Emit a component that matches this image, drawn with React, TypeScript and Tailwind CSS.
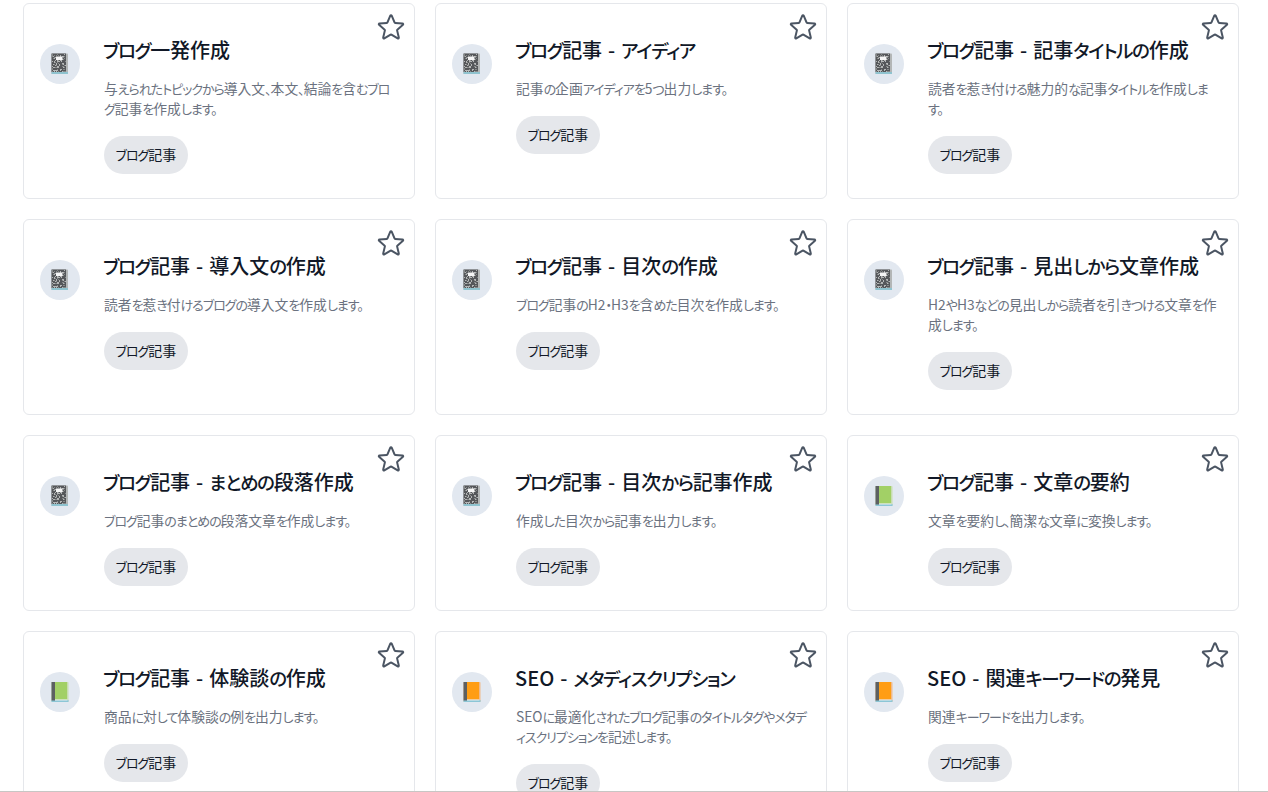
import React from "react";
import { HiOutlineStar } from "react-icons/hi2";

type Kind = "note" | "green" | "orange";

const speckles: [number, number, string][] = [];
let seed = 17;
for (let y = 0; y < 18; y += 1) {
  for (let x = 0; x < 14; x += 1) {
    seed = (seed * 137 + 59) % 1009;
    if (seed % 5 < 2) speckles.push([x, y, seed % 2 ? "#b4b6b6" : "#858888"]);
  }
}

function BookIcon({ kind }: { kind: Kind }) {
  if (kind === "note") {
    return (
      <svg width="18" height="22" viewBox="0 0 18 22" aria-hidden="true">
        <rect x="0.5" y="0.5" width="16.5" height="20.5" rx="0.8" fill="#b3b6b6" />
        <rect x="0.5" y="19" width="16.5" height="2" fill="#8fc3cf" />
        <rect x="0.5" y="0.5" width="14.5" height="18.5" fill="#55575a" />
        {speckles.map(([x, y, c], i) => (
          <rect key={i} x={1 + x} y={1 + y} width="1" height="1" fill={c} />
        ))}
        <rect x="5" y="3.5" width="6.5" height="3.5" fill="#f5f5f5" />
      </svg>
    );
  }
  const main = kind === "green" ? "#a2d066" : "#ff9d14";
  const edge = kind === "green" ? "#c7ddb0" : "#f0b98a";
  return (
    <svg width="18" height="22" viewBox="0 0 18 22" aria-hidden="true">
      <rect x="0.5" y="1" width="17" height="20" rx="0.8" fill={edge} />
      <rect x="0.5" y="19" width="17" height="2" fill="#8cc6d6" />
      <rect x="0.5" y="1" width="3.5" height="18.5" fill="#5d6062" />
      <rect x="4" y="1" width="12" height="17.5" fill={main} />
      <rect x="4" y="18.5" width="12.5" height="1" fill="#e7eef0" />
    </svg>
  );
}

// The reference's typeface has condensed kana beside full-width kanji.
function Narrow({ text, kanaClass }: { text: string; kanaClass: string }) {
  const parts = text.split(/([\u3040-\u30ff、。・]+)/);
  return (
    <>
      {parts.map((p, i) =>
        i % 2 === 1 ? (
          <span key={i} className={kanaClass}>
            {p}
          </span>
        ) : (
          <React.Fragment key={i}>{p}</React.Fragment>
        ),
      )}
    </>
  );
}

type Item = { title: string; desc: string; kind: Kind };

const items: Item[] = [
  { title: "ブログ一発作成", desc: "与えられたトピックから導入文、本文、結論を含むブログ記事を作成します。", kind: "note" },
  { title: "ブログ記事 - アイディア", desc: "記事の企画アイディアを5つ出力します。", kind: "note" },
  { title: "ブログ記事 - 記事タイトルの作成", desc: "読者を惹き付ける魅力的な記事タイトルを作成します。", kind: "note" },
  { title: "ブログ記事 - 導入文の作成", desc: "読者を惹き付けるブログの導入文を作成します。", kind: "note" },
  { title: "ブログ記事 - 目次の作成", desc: "ブログ記事のH2・H3を含めた目次を作成します。", kind: "note" },
  { title: "ブログ記事 - 見出しから文章作成", desc: "H2やH3などの見出しから読者を引きつける文章を作成します。", kind: "note" },
  { title: "ブログ記事 - まとめの段落作成", desc: "ブログ記事のまとめの段落文章を作成します。", kind: "note" },
  { title: "ブログ記事 - 目次から記事作成", desc: "作成した目次から記事を出力します。", kind: "note" },
  { title: "ブログ記事 - 文章の要約", desc: "文章を要約し、簡潔な文章に変換します。", kind: "green" },
  { title: "ブログ記事 - 体験談の作成", desc: "商品に対して体験談の例を出力します。", kind: "green" },
  { title: "SEO - メタディスクリプション", desc: "SEOに最適化されたブログ記事のタイトルタグやメタディスクリプションを記述します。", kind: "orange" },
  { title: "SEO - 関連キーワードの発見", desc: "関連キーワードを出力します。", kind: "orange" },
];

const smallKana = "text-[13px] leading-none tracking-[-0.08em]";

function Card({ item }: { item: Item }) {
  return (
    <div className="relative flex rounded-md border border-[#e5e7eb] bg-white pt-[33px] pl-4 pr-4 pb-6">
      <div className="mt-[7px] flex h-10 w-10 shrink-0 items-center justify-center rounded-full bg-[#e2e8f0]">
        <BookIcon kind={item.kind} />
      </div>
      <div className="ml-6 min-w-0 flex-1">
        <h3 className="-ml-px pb-[3px] text-xl leading-[25px] font-medium text-[#111827] [word-spacing:1.5px]">
          <Narrow text={item.title} kanaClass="text-[18.5px] leading-none tracking-[-0.07em]" />
        </h3>
        <p className="mt-[13px] text-[13.8px] leading-5 text-[#6b7280] [line-break:loose]">
          <Narrow text={item.desc} kanaClass={smallKana} />
        </p>
        <span className="mt-[18px] inline-flex h-[38px] w-[84px] items-center justify-center rounded-full bg-[#e5e7eb] pb-[3px] text-sm text-[#111827]">
          <span>
            <Narrow text="ブログ記事" kanaClass={smallKana} />
          </span>
        </span>
      </div>
      <HiOutlineStar className="absolute top-[7px] right-[7px] h-8 w-8 text-[#4b5563]" />
    </div>
  );
}

export default function App() {
  return (
    <div className="h-screen overflow-hidden border-b border-[#c8c6c4] bg-white pt-[3px] pl-[23px] [font-family:'Noto_Sans_CJK_JP','Noto_Sans',sans-serif] [font-feature-settings:'palt']">
      <div className="grid w-[1216px] grid-cols-3 gap-5">
        {items.map((item) => (
          <Card key={item.title} item={item} />
        ))}
      </div>
    </div>
  );
}
